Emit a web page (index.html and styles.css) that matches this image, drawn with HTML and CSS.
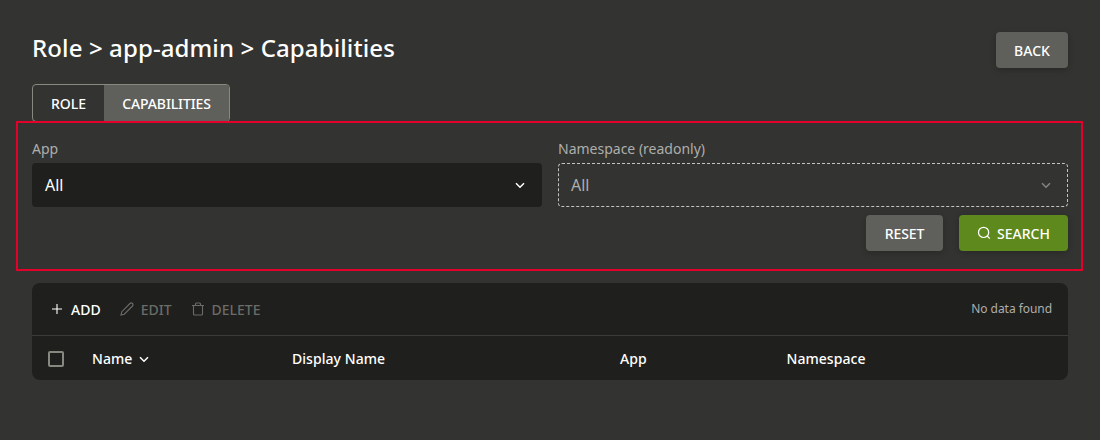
FILE: index.html
```html
<!DOCTYPE html>
<html lang="en">
<head>
<meta charset="utf-8">
<title>Role capabilities</title>
<link rel="stylesheet" href="styles.css">
</head>
<body>
<main class="page">
  <header class="header">
    <h1 class="title">Role &gt; app-admin &gt; Capabilities</h1>
    <button class="btn btn-back">BACK</button>
  </header>
  <nav class="tabs">
    <button class="tab tab-role">ROLE</button>
    <button class="tab tab-active">CAPABILITIES</button>
  </nav>
  <section class="filters">
    <div class="fields">
      <div class="field">
        <span class="label">App</span>
        <div class="select"><span>All</span>
          <svg class="chevron" viewBox="0 0 16 16"><path d="M4 6.2 8 10.2 12 6.2"/></svg></div>
      </div>
      <div class="field">
        <span class="label">Namespace (readonly)</span>
        <div class="select readonly"><span>All</span>
          <svg class="chevron" viewBox="0 0 16 16"><path d="M4 6.2 8 10.2 12 6.2"/></svg></div>
      </div>
    </div>
    <div class="actions">
      <button class="btn btn-reset">RESET</button>
      <button class="btn btn-search"><svg class="search-icon" viewBox="0 0 14 14"><circle cx="6.6" cy="6.4" r="5.1"/><path d="M10.2 10 12.8 12.6"/></svg>SEARCH</button>
    </div>
  </section>
  <section class="panel">
    <div class="toolbar">
      <button class="tool tool-add"><svg class="icon" viewBox="0 0 14 14"><path d="M7 2v10M2 7h10"/></svg>ADD</button>
      <button class="tool tool-edit disabled"><svg class="icon" viewBox="0 0 14 14"><path d="M1 13 1.8 9.700 10 1.500a1.700 1.700 0 0 1 2.500 2.500L4.300 12.200Z"/></svg>EDIT</button>
      <button class="tool tool-delete disabled"><svg class="icon" viewBox="0 0 14 14"><path d="M1 3.500h12M4.500 3.500V2a1 1 0 0 1 1-1h3a1 1 0 0 1 1 1v1.500M2.500 3.500V12a1 1 0 0 0 1 1h7a1 1 0 0 0 1-1V3.500"/></svg>DELETE</button>
      <span class="status">No data found</span>
    </div>
    <div class="columns">
      <span class="checkbox"></span>
      <span class="name">Name <svg class="chevron" viewBox="0 0 16 16"><path d="M4 6.200 8 10.200 12 6.200"/></svg></span>
      <span>Display Name</span>
      <span>App</span>
      <span class="namespace">Namespace</span>
    </div>
  </section>
</main>
</body>
</html>
```
FILE: styles.css
```css
* { box-sizing: border-box; }
body { margin: 0; background: #333331; color: #fff; font-family: "Noto Sans", sans-serif; }
button { font: inherit; color: inherit; border: 0; background: none; padding: 0; margin: 0; }
svg { fill: none; stroke: currentColor; flex: none; }
.page { padding: 32px 32px 0; }
.header { display: flex; justify-content: space-between; height: 52px; }
.title { margin: 0; font-size: 24px; line-height: 32px; font-weight: 500; letter-spacing: .11px; }
.btn { height: 36px; border-radius: 4px; background: #5f605b; font-size: 14px; font-weight: 500; line-height: 20px; padding-top: 2px; box-shadow: 0 2px 6px rgba(0,0,0,.22); display: flex; align-items: center; justify-content: center; }
.btn-back { width: 72px; }
.tabs { display: flex; width: 198px; height: 38px; border: 1px solid #878880; border-radius: 4px; overflow: hidden; }
.tab { font-size: 14px; font-weight: 500; line-height: 20px; padding-top: 2px; }
.tab-role { width: 71px; }
.tab-active { flex: 1; background: #5f605b; letter-spacing: -.12px; }
.filters { position: relative; width: 1067px; height: 150px; margin: -1px 0 0 -16px; border: 2px solid #e4002b; padding: 16px 13px 0 14px; }
.fields { display: grid; grid-template-columns: 510px 510px; gap: 16px; }
.label { display: block; height: 24px; font-size: 14px; line-height: 20px; color: #aeaeac; }
.select { height: 44px; border-radius: 4px; background: #1f1f1d; padding: 0 14px 0 13px; display: flex; align-items: center; justify-content: space-between; font-size: 16px; }
.chevron { width: 16px; height: 16px; stroke-width: 1.5; }
.readonly { background: none; border: 1px dashed #c4c4c0; color: #aeaeac; padding: 0 13px 0 12px; }
.readonly .chevron { color: #858582; }
.actions { display: flex; justify-content: flex-end; gap: 16px; margin-top: 8px; }
.btn-reset { width: 77px; letter-spacing: -.1px; }
.btn-search { width: 109px; background: #5e891c; gap: 6px; }
.search-icon { width: 14px; height: 14px; stroke-width: 1.2; margin-top: -3px; }
.panel { margin-top: 12px; height: 97px; background: #1f1f1d; border-radius: 8px; }
.toolbar { height: 53px; border-bottom: 1px solid #3b3b39; display: flex; align-items: center; padding: 0 16px 0 18px; }
.tool { display: flex; align-items: center; gap: 7px; font-size: 14px; font-weight: 500; line-height: 20px; padding-top: 1px; }
.icon { width: 14px; height: 14px; stroke-width: 1.1; margin-top: -2px; }
.tool-edit, .tool-delete { margin-left: 19px; }
.disabled { color: #6b6b68; }
.status { margin: -2px 0 0 auto; font-size: 12px; letter-spacing: -.05px; color: #aeaeac; }
.columns { height: 44px; display: grid; grid-template-columns: 44px 200px 328px 166px 1fr; align-items: center; padding: 2px 16px 0; font-size: 14px; font-weight: 500; line-height: 20px; letter-spacing: .05px; }
.checkbox { width: 16px; height: 16px; border: 2px solid #878880; border-radius: 2px; }
.name { display: flex; align-items: center; gap: 4px; }
.namespace { padding-left: .5px; }
```
